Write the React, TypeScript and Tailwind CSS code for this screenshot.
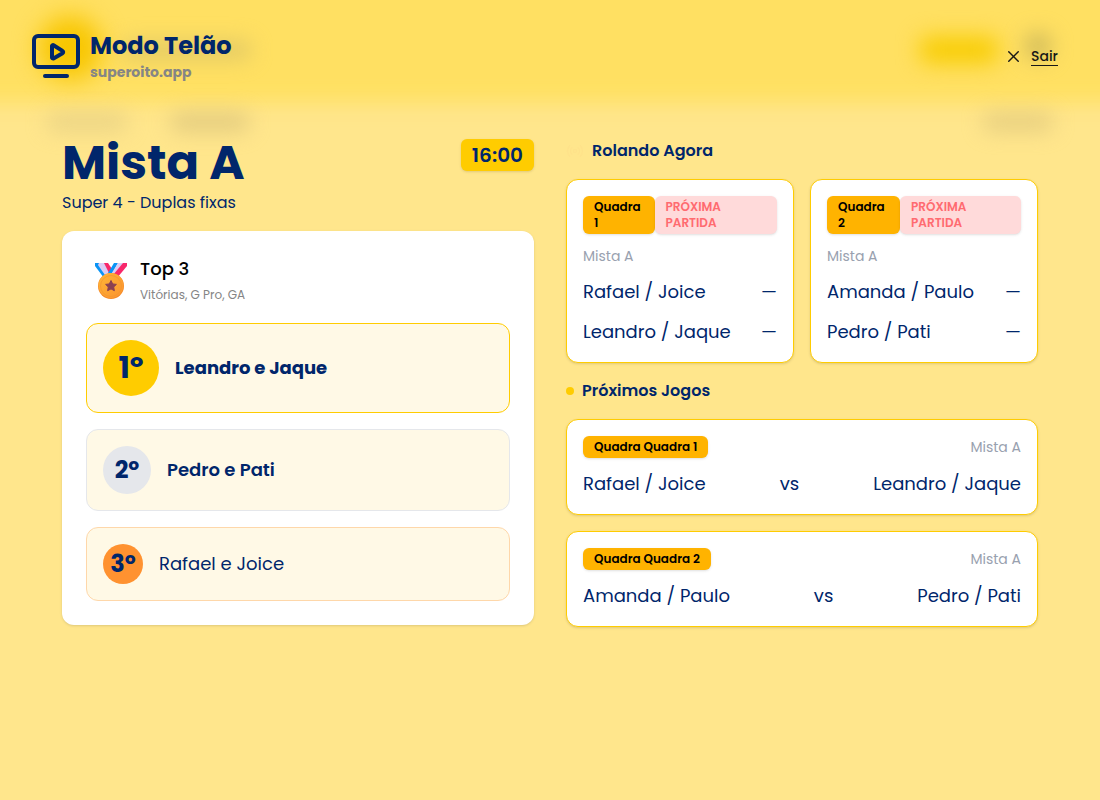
import { useId } from "react";
import { X } from "lucide-react";

const ranking = [
  {
    position: "1º",
    team: "Leandro e Jaque",
    row: "border-[#ffcc00]",
    circle: "size-14 bg-[#ffcc00] text-3xl",
    name: "font-bold",
  },
  {
    position: "2º",
    team: "Pedro e Pati",
    row: "border-gray-200",
    circle: "size-12 bg-gray-200 text-2xl",
    name: "font-semibold",
  },
  {
    position: "3º",
    team: "Rafael e Joice",
    row: "border-[#fed7aa]",
    circle: "size-10 bg-[#ff9230] text-2xl",
    name: "font-normal",
  },
];

const matches = [
  { court: "1", group: "Mista A", teams: ["Rafael / Joice", "Leandro / Jaque"] },
  { court: "2", group: "Mista A", teams: ["Amanda / Paulo", "Pedro / Pati"] },
];

function ScreenIcon() {
  return (
    <svg
      viewBox="0 0 48 48"
      className="size-12 shrink-0"
      fill="none"
      stroke="currentColor"
      strokeWidth="4"
      strokeLinecap="round"
      strokeLinejoin="round"
      aria-hidden="true"
    >
      <rect x="2" y="4" width="44" height="31" rx="4" />
      <path d="M13 44h22" />
      <path d="M20 14v11.500a1 1 0 0 0 1.500.9l9-5.200a1.300 1.300 0 0 0 0-2.300l-9-5.700a1 1 0 0 0-1.500.8z" />
    </svg>
  );
}

function LiveIcon() {
  return (
    <svg
      viewBox="0 0 24 24"
      className="w-[18px] opacity-[0.02]"
      fill="none"
      stroke="#ef4444"
      strokeWidth="2"
      strokeLinecap="round"
      aria-hidden="true"
    >
      <path d="M4.900 19.100C1 15.200 1 8.800 4.900 4.900M7.800 16.200c-2.300-2.300-2.300-6.100 0-8.500M16.200 7.800c2.300 2.300 2.300 6.100 0 8.500M19.100 4.900C23 8.800 23 15.100 19.100 19" />
      <circle cx="12" cy="12" r="2" />
    </svg>
  );
}

function MedalIcon() {
  const id = useId();
  return (
    <svg viewBox="0 0 34 38" className="h-[38px] w-[34px]" aria-hidden="true">
      <defs>
        <linearGradient id={id} x1="0" y1="0" x2="1" y2="1">
          <stop offset="0" stopColor="#ffb636" />
          <stop offset="1" stopColor="#fb9330" />
        </linearGradient>
      </defs>
      <path d="M1 1h4l10 12-5 3L1 4z" fill="#0a94f5" />
      <path d="M5 1h6l8 11-6 4L4 3z" fill="#dccdf5" />
      <path d="M10 1h4l6 9-3 5z" fill="#f8276b" />
      <path d="M20 1h4l-7 13-3-3z" fill="#0a94f5" />
      <path d="M24 1h6l-8 12-6 1z" fill="#dccdf5" />
      <path d="M29 1h4v3L23 16l-4-3z" fill="#f8276b" />
      <circle cx="17" cy="24" r="13" fill="#f58a27" />
      <circle cx="17" cy="23.500" r="12.500" fill={`url(#${id})`} />
      <circle cx="17" cy="24" r="10.500" fill="none" stroke="#f3942f" strokeWidth="0.700" />
      <path
        d="M17 18.500l1.700 3.400 3.700.5-2.700 2.600.7 3.700-3.400-1.800-3.400 1.800.7-3.700-2.700-2.600 3.700-.5z"
        fill="#8b4052"
        stroke="#8b4052"
        strokeLinejoin="round"
      />
    </svg>
  );
}

// Out-of-focus page behind the big screen overlay
function BlurredBackdrop() {
  return (
    <div aria-hidden="true" className="pointer-events-none absolute inset-x-0 top-0 h-48 overflow-hidden">
      <div className="absolute -inset-x-10 -top-10 h-[143px] bg-[#ffe062] blur-[10px]" />
      <div className="absolute left-[38px] top-[16px] size-16 rounded-full bg-[#f8c600] blur-[12px]" />
      <div className="absolute left-[120px] top-[40px] h-5 w-[132px] rounded-full bg-[#d9c266]/70 blur-[10px]" />
      <div className="absolute right-[102px] top-[37px] h-[26px] w-[78px] rounded-lg bg-[#f8cc00] blur-[11px]" />
      <div className="absolute right-[48px] top-[32px] size-7 rounded-full bg-[#c8b45a]/80 blur-[10px]" />
      <div className="absolute left-[46px] top-[112px] h-5 w-[82px] rounded-full bg-[#e0ca82]/60 blur-[10px]" />
      <div className="absolute left-[170px] top-[112px] h-5 w-[80px] rounded-full bg-[#d8c27a]/70 blur-[10px]" />
      <div className="absolute right-[46px] top-[112px] h-5 w-[72px] rounded-full bg-[#d8c27a]/60 blur-[10px]" />
    </div>
  );
}

function CourtBadge({ children }: { children: React.ReactNode }) {
  return (
    <span className="rounded-md border border-transparent bg-[#ffb300] bg-origin-border px-2.5 py-0.5 text-xs font-semibold text-black shadow-sm">
      {children}
    </span>
  );
}

export default function App() {
  return (
    <div className="relative min-h-screen bg-[#ffe68c] font-['Poppins','Inter',sans-serif] text-[#00266b]">
      <BlurredBackdrop />

      <header className="relative flex h-28 items-center justify-between pl-8 pr-[42px]">
        <div className="flex items-center gap-2.5">
          <ScreenIcon />
          <div>
            <h1 className="text-2xl font-bold leading-8">Modo Telão</h1>
            <p className="text-sm font-bold leading-5 text-[#858585]">superoito.app</p>
          </div>
        </div>
        <button type="button" className="flex items-center gap-2 text-sm font-medium text-[#171717]">
          <X className="size-[19px]" strokeWidth={1.8} />
          <span className="border-b border-current leading-[18px]">Sair</span>
        </button>
      </header>

      <main className="relative mx-auto grid max-w-5xl grid-cols-1 gap-8 px-6 pt-[27px] md:grid-cols-2">
        <section>
          <div className="mb-4 flex items-start justify-between">
            <div>
              <h2 className="text-5xl font-bold leading-[48px]">Mista A</h2>
              <p className="mt-1 text-base leading-6">Super 4 - Duplas fixas</p>
            </div>
            <span className="rounded-md bg-[#ffcc00] px-[11px] py-0.5 text-xl font-semibold leading-7 shadow-sm">
              16:00
            </span>
          </div>

          <div className="rounded-xl bg-white p-6 shadow-sm">
            <div className="mb-4 flex items-center gap-3 pl-2">
              <MedalIcon />
              <div>
                <h3 className="text-lg font-medium leading-7 text-black">Top 3</h3>
                <p className="text-xs leading-6 text-[#858585]">Vitórias, G Pro, GA</p>
              </div>
            </div>
            <ol className="space-y-4">
              {ranking.map((item) => (
                <li
                  key={item.position}
                  className={`flex items-center gap-4 rounded-xl border bg-[#fff9e6] p-4 ${item.row}`}
                >
                  <span
                    className={`flex shrink-0 items-center justify-center rounded-full font-bold ${item.circle}`}
                  >
                    {item.position}
                  </span>
                  <span className={`text-lg leading-7 ${item.name}`}>{item.team}</span>
                </li>
              ))}
            </ol>
          </div>
        </section>

        <section className="space-y-4">
          <h3 className="flex items-center gap-2 text-base font-semibold leading-6">
            <LiveIcon />
            Rolando Agora
          </h3>
          <div className="grid grid-cols-2 gap-4">
            {matches.map((match) => (
              <article
                key={match.court}
                className="space-y-3 rounded-xl border border-[#ffcc00] bg-white p-4 shadow-sm"
              >
                <div className="flex justify-between">
                  <CourtBadge>Quadra {match.court}</CourtBadge>
                  <span className="rounded-md border border-transparent bg-[#ffdada] px-2.5 py-0.5 text-xs font-semibold text-[#ff6b70] shadow-sm">
                    PRÓXIMA PARTIDA
                  </span>
                </div>
                <p className="text-sm leading-5 text-gray-400">{match.group}</p>
                {match.teams.map((team) => (
                  <div key={team} className="flex justify-between text-lg leading-7">
                    <span>{team}</span>
                    <span>—</span>
                  </div>
                ))}
              </article>
            ))}
          </div>

          <h3 className="flex items-center gap-2 text-base font-semibold leading-6">
            <span className="size-2 rounded-full bg-[#ffcc00]" />
            Próximos Jogos
          </h3>
          {matches.map((match) => (
            <article
              key={match.court}
              className="space-y-3 rounded-xl border border-[#ffcc00] bg-white p-4 shadow-sm"
            >
              <div className="flex items-center justify-between">
                <CourtBadge>Quadra Quadra {match.court}</CourtBadge>
                <span className="text-sm leading-5 text-gray-400">{match.group}</span>
              </div>
              <div className="flex justify-between text-lg leading-7">
                <span>{match.teams[0]}</span>
                <span>vs</span>
                <span>{match.teams[1]}</span>
              </div>
            </article>
          ))}
        </section>
      </main>
    </div>
  );
}
